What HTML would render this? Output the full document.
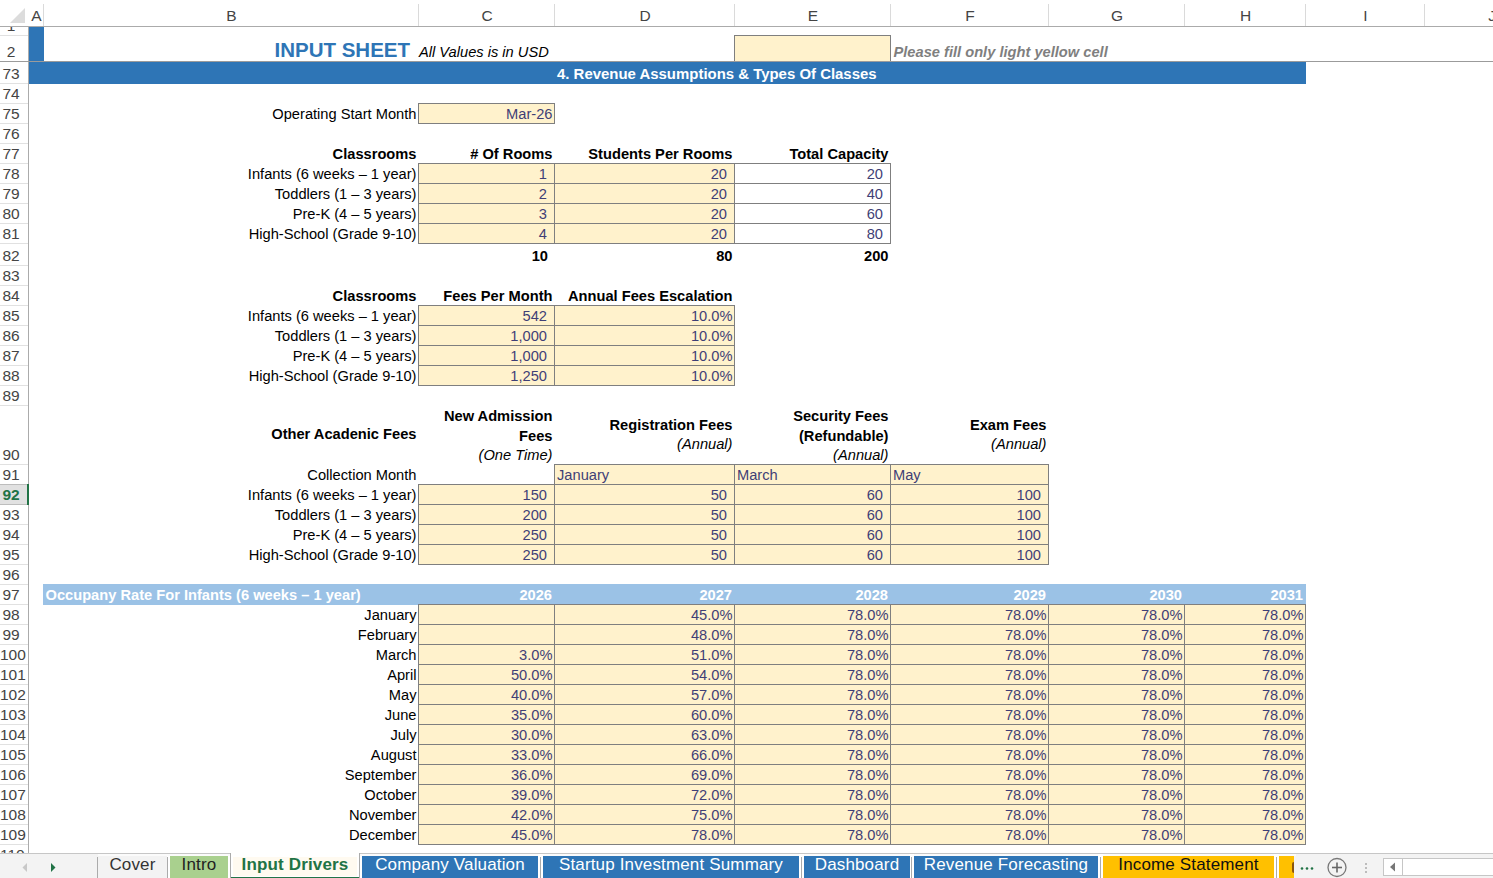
<!DOCTYPE html>
<html><head><meta charset="utf-8"><title>Input Drivers</title>
<style>
html,body{margin:0;padding:0;}
body{width:1493px;height:878px;overflow:hidden;position:relative;background:#fff;font-family:"Liberation Sans",sans-serif;}
body div{position:absolute;box-sizing:border-box;}
.t{white-space:nowrap;overflow:visible;}
.h{font-size:15.5px;color:#444444;white-space:nowrap;}
.tab{white-space:nowrap;overflow:hidden;}
b{font-weight:bold} i{font-style:italic}
</style></head><body>
<div style="left:29px;top:27px;width:15px;height:34px;background:#2E75B6"></div>
<div style="left:734px;top:35px;width:157px;height:27px;background:#FFF2CC"></div>
<div style="left:734px;top:35px;width:157px;height:1px;background:#7F7F7F"></div>
<div style="left:734px;top:61px;width:157px;height:1px;background:#7F7F7F"></div>
<div style="left:734px;top:35px;width:1px;height:27px;background:#7F7F7F"></div>
<div style="left:890px;top:35px;width:1px;height:27px;background:#7F7F7F"></div>
<div class="t" style="left:43px;top:38.22px;width:375px;height:24px;line-height:24px;text-align:right;font-size:20.5px;color:#2E75B6;font-weight:bold;font-style:normal;padding-right:8px;">INPUT SHEET</div>
<div class="t" style="left:418px;top:40.15px;width:300px;height:24px;line-height:24px;text-align:left;font-size:14.67px;color:#000;font-weight:normal;font-style:italic;padding-left:1px;">All Values is in USD</div>
<div class="t" style="left:890px;top:40.15px;width:400px;height:24px;line-height:24px;text-align:left;font-size:14.67px;color:#7F7F7F;font-weight:bold;font-style:italic;padding-left:3.5px;">Please fill only light yellow cell</div>
<div style="left:29px;top:62px;width:1277px;height:22px;background:#2E75B6"></div>
<div class="t" style="left:557px;top:62.06px;width:443px;height:24px;line-height:24px;text-align:left;font-size:14.95px;color:#fff;font-weight:bold;font-style:normal;padding-left:0px;">4. Revenue Assumptions &amp; Types Of Classes</div>
<div class="t" style="left:43px;top:102.15px;width:375px;height:24px;line-height:24px;text-align:right;font-size:14.67px;color:#000;font-weight:normal;font-style:normal;padding-right:1.5px;">Operating Start Month</div>
<div style="left:418px;top:103px;width:137px;height:21px;background:#FFF2CC"></div>
<div style="left:418px;top:103px;width:137px;height:1px;background:#7F7F7F"></div>
<div style="left:418px;top:123px;width:137px;height:1px;background:#7F7F7F"></div>
<div style="left:418px;top:103px;width:1px;height:21px;background:#7F7F7F"></div>
<div style="left:554px;top:103px;width:1px;height:21px;background:#7F7F7F"></div>
<div class="t" style="left:418px;top:102.15px;width:136px;height:24px;line-height:24px;text-align:right;font-size:14.67px;color:#3F3F76;font-weight:normal;font-style:normal;padding-right:1.5px;">Mar-26</div>
<div class="t" style="left:43px;top:142.15px;width:375px;height:24px;line-height:24px;text-align:right;font-size:14.67px;color:#000;font-weight:bold;font-style:normal;padding-right:1.5px;">Classrooms</div>
<div class="t" style="left:418px;top:142.15px;width:136px;height:24px;line-height:24px;text-align:right;font-size:14.67px;color:#000;font-weight:bold;font-style:normal;padding-right:1.5px;"># Of Rooms</div>
<div class="t" style="left:554px;top:142.15px;width:180px;height:24px;line-height:24px;text-align:right;font-size:14.67px;color:#000;font-weight:bold;font-style:normal;padding-right:1.5px;">Students Per Rooms</div>
<div class="t" style="left:734px;top:142.15px;width:156px;height:24px;line-height:24px;text-align:right;font-size:14.67px;color:#000;font-weight:bold;font-style:normal;padding-right:1.5px;">Total Capacity</div>
<div style="left:418px;top:163px;width:317px;height:81px;background:#FFF2CC"></div>
<div style="left:418px;top:163px;width:317px;height:1px;background:#7F7F7F"></div>
<div style="left:418px;top:183px;width:317px;height:1px;background:#7F7F7F"></div>
<div style="left:418px;top:203px;width:317px;height:1px;background:#7F7F7F"></div>
<div style="left:418px;top:223px;width:317px;height:1px;background:#7F7F7F"></div>
<div style="left:418px;top:243px;width:317px;height:1px;background:#7F7F7F"></div>
<div style="left:418px;top:163px;width:1px;height:81px;background:#7F7F7F"></div>
<div style="left:554px;top:163px;width:1px;height:81px;background:#7F7F7F"></div>
<div style="left:734px;top:163px;width:1px;height:81px;background:#7F7F7F"></div>
<div style="left:734px;top:163px;width:157px;height:1px;background:#7F7F7F"></div>
<div style="left:734px;top:183px;width:157px;height:1px;background:#7F7F7F"></div>
<div style="left:734px;top:203px;width:157px;height:1px;background:#7F7F7F"></div>
<div style="left:734px;top:223px;width:157px;height:1px;background:#7F7F7F"></div>
<div style="left:734px;top:243px;width:157px;height:1px;background:#7F7F7F"></div>
<div style="left:734px;top:163px;width:1px;height:81px;background:#7F7F7F"></div>
<div style="left:890px;top:163px;width:1px;height:81px;background:#7F7F7F"></div>
<div class="t" style="left:43px;top:162.15px;width:375px;height:24px;line-height:24px;text-align:right;font-size:14.67px;color:#000;font-weight:normal;font-style:normal;padding-right:1.5px;">Infants (6 weeks &ndash; 1 year)</div>
<div class="t" style="left:418px;top:162.15px;width:136px;height:24px;line-height:24px;text-align:right;font-size:14.67px;color:#3F3F76;font-weight:normal;font-style:normal;padding-right:7px;">1</div>
<div class="t" style="left:554px;top:162.15px;width:180px;height:24px;line-height:24px;text-align:right;font-size:14.67px;color:#3F3F76;font-weight:normal;font-style:normal;padding-right:7px;">20</div>
<div class="t" style="left:734px;top:162.15px;width:156px;height:24px;line-height:24px;text-align:right;font-size:14.67px;color:#3F3F76;font-weight:normal;font-style:normal;padding-right:7px;">20</div>
<div class="t" style="left:43px;top:182.15px;width:375px;height:24px;line-height:24px;text-align:right;font-size:14.67px;color:#000;font-weight:normal;font-style:normal;padding-right:1.5px;">Toddlers (1 &ndash; 3 years)</div>
<div class="t" style="left:418px;top:182.15px;width:136px;height:24px;line-height:24px;text-align:right;font-size:14.67px;color:#3F3F76;font-weight:normal;font-style:normal;padding-right:7px;">2</div>
<div class="t" style="left:554px;top:182.15px;width:180px;height:24px;line-height:24px;text-align:right;font-size:14.67px;color:#3F3F76;font-weight:normal;font-style:normal;padding-right:7px;">20</div>
<div class="t" style="left:734px;top:182.15px;width:156px;height:24px;line-height:24px;text-align:right;font-size:14.67px;color:#3F3F76;font-weight:normal;font-style:normal;padding-right:7px;">40</div>
<div class="t" style="left:43px;top:202.15px;width:375px;height:24px;line-height:24px;text-align:right;font-size:14.67px;color:#000;font-weight:normal;font-style:normal;padding-right:1.5px;">Pre-K (4 &ndash; 5 years)</div>
<div class="t" style="left:418px;top:202.15px;width:136px;height:24px;line-height:24px;text-align:right;font-size:14.67px;color:#3F3F76;font-weight:normal;font-style:normal;padding-right:7px;">3</div>
<div class="t" style="left:554px;top:202.15px;width:180px;height:24px;line-height:24px;text-align:right;font-size:14.67px;color:#3F3F76;font-weight:normal;font-style:normal;padding-right:7px;">20</div>
<div class="t" style="left:734px;top:202.15px;width:156px;height:24px;line-height:24px;text-align:right;font-size:14.67px;color:#3F3F76;font-weight:normal;font-style:normal;padding-right:7px;">60</div>
<div class="t" style="left:43px;top:222.15px;width:375px;height:24px;line-height:24px;text-align:right;font-size:14.67px;color:#000;font-weight:normal;font-style:normal;padding-right:1.5px;">High-School (Grade 9-10)</div>
<div class="t" style="left:418px;top:222.15px;width:136px;height:24px;line-height:24px;text-align:right;font-size:14.67px;color:#3F3F76;font-weight:normal;font-style:normal;padding-right:7px;">4</div>
<div class="t" style="left:554px;top:222.15px;width:180px;height:24px;line-height:24px;text-align:right;font-size:14.67px;color:#3F3F76;font-weight:normal;font-style:normal;padding-right:7px;">20</div>
<div class="t" style="left:734px;top:222.15px;width:156px;height:24px;line-height:24px;text-align:right;font-size:14.67px;color:#3F3F76;font-weight:normal;font-style:normal;padding-right:7px;">80</div>
<div class="t" style="left:418px;top:244.15px;width:136px;height:24px;line-height:24px;text-align:right;font-size:14.67px;color:#000;font-weight:bold;font-style:normal;padding-right:6px;">10</div>
<div class="t" style="left:554px;top:244.15px;width:180px;height:24px;line-height:24px;text-align:right;font-size:14.67px;color:#000;font-weight:bold;font-style:normal;padding-right:1.5px;">80</div>
<div class="t" style="left:734px;top:244.15px;width:156px;height:24px;line-height:24px;text-align:right;font-size:14.67px;color:#000;font-weight:bold;font-style:normal;padding-right:1.5px;">200</div>
<div class="t" style="left:43px;top:284.15px;width:375px;height:24px;line-height:24px;text-align:right;font-size:14.67px;color:#000;font-weight:bold;font-style:normal;padding-right:1.5px;">Classrooms</div>
<div class="t" style="left:418px;top:284.15px;width:136px;height:24px;line-height:24px;text-align:right;font-size:14.67px;color:#000;font-weight:bold;font-style:normal;padding-right:1.5px;">Fees Per Month</div>
<div class="t" style="left:554px;top:284.15px;width:180px;height:24px;line-height:24px;text-align:right;font-size:14.67px;color:#000;font-weight:bold;font-style:normal;padding-right:1.5px;">Annual Fees Escalation</div>
<div style="left:418px;top:305px;width:317px;height:81px;background:#FFF2CC"></div>
<div style="left:418px;top:305px;width:317px;height:1px;background:#7F7F7F"></div>
<div style="left:418px;top:325px;width:317px;height:1px;background:#7F7F7F"></div>
<div style="left:418px;top:345px;width:317px;height:1px;background:#7F7F7F"></div>
<div style="left:418px;top:365px;width:317px;height:1px;background:#7F7F7F"></div>
<div style="left:418px;top:385px;width:317px;height:1px;background:#7F7F7F"></div>
<div style="left:418px;top:305px;width:1px;height:81px;background:#7F7F7F"></div>
<div style="left:554px;top:305px;width:1px;height:81px;background:#7F7F7F"></div>
<div style="left:734px;top:305px;width:1px;height:81px;background:#7F7F7F"></div>
<div class="t" style="left:43px;top:304.15px;width:375px;height:24px;line-height:24px;text-align:right;font-size:14.67px;color:#000;font-weight:normal;font-style:normal;padding-right:1.5px;">Infants (6 weeks &ndash; 1 year)</div>
<div class="t" style="left:418px;top:304.15px;width:136px;height:24px;line-height:24px;text-align:right;font-size:14.67px;color:#3F3F76;font-weight:normal;font-style:normal;padding-right:7px;">542</div>
<div class="t" style="left:554px;top:304.15px;width:180px;height:24px;line-height:24px;text-align:right;font-size:14.67px;color:#3F3F76;font-weight:normal;font-style:normal;padding-right:1.5px;">10.0%</div>
<div class="t" style="left:43px;top:324.15px;width:375px;height:24px;line-height:24px;text-align:right;font-size:14.67px;color:#000;font-weight:normal;font-style:normal;padding-right:1.5px;">Toddlers (1 &ndash; 3 years)</div>
<div class="t" style="left:418px;top:324.15px;width:136px;height:24px;line-height:24px;text-align:right;font-size:14.67px;color:#3F3F76;font-weight:normal;font-style:normal;padding-right:7px;">1,000</div>
<div class="t" style="left:554px;top:324.15px;width:180px;height:24px;line-height:24px;text-align:right;font-size:14.67px;color:#3F3F76;font-weight:normal;font-style:normal;padding-right:1.5px;">10.0%</div>
<div class="t" style="left:43px;top:344.15px;width:375px;height:24px;line-height:24px;text-align:right;font-size:14.67px;color:#000;font-weight:normal;font-style:normal;padding-right:1.5px;">Pre-K (4 &ndash; 5 years)</div>
<div class="t" style="left:418px;top:344.15px;width:136px;height:24px;line-height:24px;text-align:right;font-size:14.67px;color:#3F3F76;font-weight:normal;font-style:normal;padding-right:7px;">1,000</div>
<div class="t" style="left:554px;top:344.15px;width:180px;height:24px;line-height:24px;text-align:right;font-size:14.67px;color:#3F3F76;font-weight:normal;font-style:normal;padding-right:1.5px;">10.0%</div>
<div class="t" style="left:43px;top:364.15px;width:375px;height:24px;line-height:24px;text-align:right;font-size:14.67px;color:#000;font-weight:normal;font-style:normal;padding-right:1.5px;">High-School (Grade 9-10)</div>
<div class="t" style="left:418px;top:364.15px;width:136px;height:24px;line-height:24px;text-align:right;font-size:14.67px;color:#3F3F76;font-weight:normal;font-style:normal;padding-right:7px;">1,250</div>
<div class="t" style="left:554px;top:364.15px;width:180px;height:24px;line-height:24px;text-align:right;font-size:14.67px;color:#3F3F76;font-weight:normal;font-style:normal;padding-right:1.5px;">10.0%</div>
<div class="t" style="left:43px;top:406px;width:375px;height:58px;display:flex;flex-direction:column;justify-content:center;text-align:right;font-size:14.67px;line-height:19.5px;padding-right:1.5px"><span style="display:block"><b>Other Acadenic Fees</b></span></div>
<div class="t" style="left:418px;top:407.3px;width:136px;height:58.0px;display:flex;flex-direction:column;justify-content:center;text-align:right;font-size:14.67px;line-height:19.5px;padding-right:1.5px"><span style="display:block"><b>New Admission</b></span><span style="display:block"><b>Fees</b></span><span style="display:block"><i>(One Time)</i></span></div>
<div class="t" style="left:554px;top:406px;width:180px;height:58px;display:flex;flex-direction:column;justify-content:center;text-align:right;font-size:14.67px;line-height:19.5px;padding-right:1.5px"><span style="display:block"><b>Registration Fees</b></span><span style="display:block"><i>(Annual)</i></span></div>
<div class="t" style="left:734px;top:407.3px;width:156px;height:58.0px;display:flex;flex-direction:column;justify-content:center;text-align:right;font-size:14.67px;line-height:19.5px;padding-right:1.5px"><span style="display:block"><b>Security Fees</b></span><span style="display:block"><b>(Refundable)</b></span><span style="display:block"><i>(Annual)</i></span></div>
<div class="t" style="left:890px;top:406px;width:158px;height:58px;display:flex;flex-direction:column;justify-content:center;text-align:right;font-size:14.67px;line-height:19.5px;padding-right:1.5px"><span style="display:block"><b>Exam Fees</b></span><span style="display:block"><i>(Annual)</i></span></div>
<div class="t" style="left:43px;top:463.15px;width:375px;height:24px;line-height:24px;text-align:right;font-size:14.67px;color:#000;font-weight:normal;font-style:normal;padding-right:1.5px;">Collection Month</div>
<div style="left:554px;top:464px;width:495px;height:21px;background:#FFF2CC"></div>
<div style="left:554px;top:464px;width:495px;height:1px;background:#7F7F7F"></div>
<div style="left:554px;top:484px;width:495px;height:1px;background:#7F7F7F"></div>
<div style="left:554px;top:464px;width:1px;height:21px;background:#7F7F7F"></div>
<div style="left:734px;top:464px;width:1px;height:21px;background:#7F7F7F"></div>
<div style="left:890px;top:464px;width:1px;height:21px;background:#7F7F7F"></div>
<div style="left:1048px;top:464px;width:1px;height:21px;background:#7F7F7F"></div>
<div class="t" style="left:554px;top:463.15px;width:180px;height:24px;line-height:24px;text-align:left;font-size:14.67px;color:#3F3F76;font-weight:normal;font-style:normal;padding-left:3px;">January</div>
<div class="t" style="left:734px;top:463.15px;width:156px;height:24px;line-height:24px;text-align:left;font-size:14.67px;color:#3F3F76;font-weight:normal;font-style:normal;padding-left:3px;">March</div>
<div class="t" style="left:890px;top:463.15px;width:158px;height:24px;line-height:24px;text-align:left;font-size:14.67px;color:#3F3F76;font-weight:normal;font-style:normal;padding-left:3px;">May</div>
<div style="left:418px;top:484px;width:631px;height:81px;background:#FFF2CC"></div>
<div style="left:418px;top:484px;width:631px;height:1px;background:#7F7F7F"></div>
<div style="left:418px;top:504px;width:631px;height:1px;background:#7F7F7F"></div>
<div style="left:418px;top:524px;width:631px;height:1px;background:#7F7F7F"></div>
<div style="left:418px;top:544px;width:631px;height:1px;background:#7F7F7F"></div>
<div style="left:418px;top:564px;width:631px;height:1px;background:#7F7F7F"></div>
<div style="left:418px;top:484px;width:1px;height:81px;background:#7F7F7F"></div>
<div style="left:554px;top:484px;width:1px;height:81px;background:#7F7F7F"></div>
<div style="left:734px;top:484px;width:1px;height:81px;background:#7F7F7F"></div>
<div style="left:890px;top:484px;width:1px;height:81px;background:#7F7F7F"></div>
<div style="left:1048px;top:484px;width:1px;height:81px;background:#7F7F7F"></div>
<div class="t" style="left:43px;top:483.15px;width:375px;height:24px;line-height:24px;text-align:right;font-size:14.67px;color:#000;font-weight:normal;font-style:normal;padding-right:1.5px;">Infants (6 weeks &ndash; 1 year)</div>
<div class="t" style="left:418px;top:483.15px;width:136px;height:24px;line-height:24px;text-align:right;font-size:14.67px;color:#3F3F76;font-weight:normal;font-style:normal;padding-right:7px;">150</div>
<div class="t" style="left:554px;top:483.15px;width:180px;height:24px;line-height:24px;text-align:right;font-size:14.67px;color:#3F3F76;font-weight:normal;font-style:normal;padding-right:7px;">50</div>
<div class="t" style="left:734px;top:483.15px;width:156px;height:24px;line-height:24px;text-align:right;font-size:14.67px;color:#3F3F76;font-weight:normal;font-style:normal;padding-right:7px;">60</div>
<div class="t" style="left:890px;top:483.15px;width:158px;height:24px;line-height:24px;text-align:right;font-size:14.67px;color:#3F3F76;font-weight:normal;font-style:normal;padding-right:7px;">100</div>
<div class="t" style="left:43px;top:503.15px;width:375px;height:24px;line-height:24px;text-align:right;font-size:14.67px;color:#000;font-weight:normal;font-style:normal;padding-right:1.5px;">Toddlers (1 &ndash; 3 years)</div>
<div class="t" style="left:418px;top:503.15px;width:136px;height:24px;line-height:24px;text-align:right;font-size:14.67px;color:#3F3F76;font-weight:normal;font-style:normal;padding-right:7px;">200</div>
<div class="t" style="left:554px;top:503.15px;width:180px;height:24px;line-height:24px;text-align:right;font-size:14.67px;color:#3F3F76;font-weight:normal;font-style:normal;padding-right:7px;">50</div>
<div class="t" style="left:734px;top:503.15px;width:156px;height:24px;line-height:24px;text-align:right;font-size:14.67px;color:#3F3F76;font-weight:normal;font-style:normal;padding-right:7px;">60</div>
<div class="t" style="left:890px;top:503.15px;width:158px;height:24px;line-height:24px;text-align:right;font-size:14.67px;color:#3F3F76;font-weight:normal;font-style:normal;padding-right:7px;">100</div>
<div class="t" style="left:43px;top:523.15px;width:375px;height:24px;line-height:24px;text-align:right;font-size:14.67px;color:#000;font-weight:normal;font-style:normal;padding-right:1.5px;">Pre-K (4 &ndash; 5 years)</div>
<div class="t" style="left:418px;top:523.15px;width:136px;height:24px;line-height:24px;text-align:right;font-size:14.67px;color:#3F3F76;font-weight:normal;font-style:normal;padding-right:7px;">250</div>
<div class="t" style="left:554px;top:523.15px;width:180px;height:24px;line-height:24px;text-align:right;font-size:14.67px;color:#3F3F76;font-weight:normal;font-style:normal;padding-right:7px;">50</div>
<div class="t" style="left:734px;top:523.15px;width:156px;height:24px;line-height:24px;text-align:right;font-size:14.67px;color:#3F3F76;font-weight:normal;font-style:normal;padding-right:7px;">60</div>
<div class="t" style="left:890px;top:523.15px;width:158px;height:24px;line-height:24px;text-align:right;font-size:14.67px;color:#3F3F76;font-weight:normal;font-style:normal;padding-right:7px;">100</div>
<div class="t" style="left:43px;top:543.15px;width:375px;height:24px;line-height:24px;text-align:right;font-size:14.67px;color:#000;font-weight:normal;font-style:normal;padding-right:1.5px;">High-School (Grade 9-10)</div>
<div class="t" style="left:418px;top:543.15px;width:136px;height:24px;line-height:24px;text-align:right;font-size:14.67px;color:#3F3F76;font-weight:normal;font-style:normal;padding-right:7px;">250</div>
<div class="t" style="left:554px;top:543.15px;width:180px;height:24px;line-height:24px;text-align:right;font-size:14.67px;color:#3F3F76;font-weight:normal;font-style:normal;padding-right:7px;">50</div>
<div class="t" style="left:734px;top:543.15px;width:156px;height:24px;line-height:24px;text-align:right;font-size:14.67px;color:#3F3F76;font-weight:normal;font-style:normal;padding-right:7px;">60</div>
<div class="t" style="left:890px;top:543.15px;width:158px;height:24px;line-height:24px;text-align:right;font-size:14.67px;color:#3F3F76;font-weight:normal;font-style:normal;padding-right:7px;">100</div>
<div style="left:43px;top:584px;width:1263px;height:21px;background:#9BC2E6"></div>
<div class="t" style="left:43px;top:583.15px;width:675px;height:24px;line-height:24px;text-align:left;font-size:14.67px;color:#fff;font-weight:bold;font-style:normal;padding-left:2.5px;">Occupany Rate For Infants (6 weeks &ndash; 1 year)</div>
<div class="t" style="left:418px;top:583.15px;width:136px;height:24px;line-height:24px;text-align:right;font-size:14.67px;color:#fff;font-weight:bold;font-style:normal;padding-right:2px;">2026</div>
<div class="t" style="left:554px;top:583.15px;width:180px;height:24px;line-height:24px;text-align:right;font-size:14.67px;color:#fff;font-weight:bold;font-style:normal;padding-right:2px;">2027</div>
<div class="t" style="left:734px;top:583.15px;width:156px;height:24px;line-height:24px;text-align:right;font-size:14.67px;color:#fff;font-weight:bold;font-style:normal;padding-right:2px;">2028</div>
<div class="t" style="left:890px;top:583.15px;width:158px;height:24px;line-height:24px;text-align:right;font-size:14.67px;color:#fff;font-weight:bold;font-style:normal;padding-right:2px;">2029</div>
<div class="t" style="left:1048px;top:583.15px;width:136px;height:24px;line-height:24px;text-align:right;font-size:14.67px;color:#fff;font-weight:bold;font-style:normal;padding-right:2px;">2030</div>
<div class="t" style="left:1184px;top:583.15px;width:121px;height:24px;line-height:24px;text-align:right;font-size:14.67px;color:#fff;font-weight:bold;font-style:normal;padding-right:2px;">2031</div>
<div style="left:418px;top:604px;width:888px;height:241px;background:#FFF2CC"></div>
<div style="left:418px;top:604px;width:888px;height:1px;background:#7F7F7F"></div>
<div style="left:418px;top:624px;width:888px;height:1px;background:#7F7F7F"></div>
<div style="left:418px;top:644px;width:888px;height:1px;background:#7F7F7F"></div>
<div style="left:418px;top:664px;width:888px;height:1px;background:#7F7F7F"></div>
<div style="left:418px;top:684px;width:888px;height:1px;background:#7F7F7F"></div>
<div style="left:418px;top:704px;width:888px;height:1px;background:#7F7F7F"></div>
<div style="left:418px;top:724px;width:888px;height:1px;background:#7F7F7F"></div>
<div style="left:418px;top:744px;width:888px;height:1px;background:#7F7F7F"></div>
<div style="left:418px;top:764px;width:888px;height:1px;background:#7F7F7F"></div>
<div style="left:418px;top:784px;width:888px;height:1px;background:#7F7F7F"></div>
<div style="left:418px;top:804px;width:888px;height:1px;background:#7F7F7F"></div>
<div style="left:418px;top:824px;width:888px;height:1px;background:#7F7F7F"></div>
<div style="left:418px;top:844px;width:888px;height:1px;background:#7F7F7F"></div>
<div style="left:418px;top:604px;width:1px;height:241px;background:#7F7F7F"></div>
<div style="left:554px;top:604px;width:1px;height:241px;background:#7F7F7F"></div>
<div style="left:734px;top:604px;width:1px;height:241px;background:#7F7F7F"></div>
<div style="left:890px;top:604px;width:1px;height:241px;background:#7F7F7F"></div>
<div style="left:1048px;top:604px;width:1px;height:241px;background:#7F7F7F"></div>
<div style="left:1184px;top:604px;width:1px;height:241px;background:#7F7F7F"></div>
<div style="left:1305px;top:604px;width:1px;height:241px;background:#7F7F7F"></div>
<div class="t" style="left:43px;top:603.15px;width:375px;height:24px;line-height:24px;text-align:right;font-size:14.67px;color:#000;font-weight:normal;font-style:normal;padding-right:1.5px;">January</div>
<div class="t" style="left:554px;top:603.15px;width:180px;height:24px;line-height:24px;text-align:right;font-size:14.67px;color:#3F3F76;font-weight:normal;font-style:normal;padding-right:1.5px;">45.0%</div>
<div class="t" style="left:734px;top:603.15px;width:156px;height:24px;line-height:24px;text-align:right;font-size:14.67px;color:#3F3F76;font-weight:normal;font-style:normal;padding-right:1.5px;">78.0%</div>
<div class="t" style="left:890px;top:603.15px;width:158px;height:24px;line-height:24px;text-align:right;font-size:14.67px;color:#3F3F76;font-weight:normal;font-style:normal;padding-right:1.5px;">78.0%</div>
<div class="t" style="left:1048px;top:603.15px;width:136px;height:24px;line-height:24px;text-align:right;font-size:14.67px;color:#3F3F76;font-weight:normal;font-style:normal;padding-right:1.5px;">78.0%</div>
<div class="t" style="left:1184px;top:603.15px;width:121px;height:24px;line-height:24px;text-align:right;font-size:14.67px;color:#3F3F76;font-weight:normal;font-style:normal;padding-right:1.5px;">78.0%</div>
<div class="t" style="left:43px;top:623.15px;width:375px;height:24px;line-height:24px;text-align:right;font-size:14.67px;color:#000;font-weight:normal;font-style:normal;padding-right:1.5px;">February</div>
<div class="t" style="left:554px;top:623.15px;width:180px;height:24px;line-height:24px;text-align:right;font-size:14.67px;color:#3F3F76;font-weight:normal;font-style:normal;padding-right:1.5px;">48.0%</div>
<div class="t" style="left:734px;top:623.15px;width:156px;height:24px;line-height:24px;text-align:right;font-size:14.67px;color:#3F3F76;font-weight:normal;font-style:normal;padding-right:1.5px;">78.0%</div>
<div class="t" style="left:890px;top:623.15px;width:158px;height:24px;line-height:24px;text-align:right;font-size:14.67px;color:#3F3F76;font-weight:normal;font-style:normal;padding-right:1.5px;">78.0%</div>
<div class="t" style="left:1048px;top:623.15px;width:136px;height:24px;line-height:24px;text-align:right;font-size:14.67px;color:#3F3F76;font-weight:normal;font-style:normal;padding-right:1.5px;">78.0%</div>
<div class="t" style="left:1184px;top:623.15px;width:121px;height:24px;line-height:24px;text-align:right;font-size:14.67px;color:#3F3F76;font-weight:normal;font-style:normal;padding-right:1.5px;">78.0%</div>
<div class="t" style="left:43px;top:643.15px;width:375px;height:24px;line-height:24px;text-align:right;font-size:14.67px;color:#000;font-weight:normal;font-style:normal;padding-right:1.5px;">March</div>
<div class="t" style="left:418px;top:643.15px;width:136px;height:24px;line-height:24px;text-align:right;font-size:14.67px;color:#3F3F76;font-weight:normal;font-style:normal;padding-right:1.5px;">3.0%</div>
<div class="t" style="left:554px;top:643.15px;width:180px;height:24px;line-height:24px;text-align:right;font-size:14.67px;color:#3F3F76;font-weight:normal;font-style:normal;padding-right:1.5px;">51.0%</div>
<div class="t" style="left:734px;top:643.15px;width:156px;height:24px;line-height:24px;text-align:right;font-size:14.67px;color:#3F3F76;font-weight:normal;font-style:normal;padding-right:1.5px;">78.0%</div>
<div class="t" style="left:890px;top:643.15px;width:158px;height:24px;line-height:24px;text-align:right;font-size:14.67px;color:#3F3F76;font-weight:normal;font-style:normal;padding-right:1.5px;">78.0%</div>
<div class="t" style="left:1048px;top:643.15px;width:136px;height:24px;line-height:24px;text-align:right;font-size:14.67px;color:#3F3F76;font-weight:normal;font-style:normal;padding-right:1.5px;">78.0%</div>
<div class="t" style="left:1184px;top:643.15px;width:121px;height:24px;line-height:24px;text-align:right;font-size:14.67px;color:#3F3F76;font-weight:normal;font-style:normal;padding-right:1.5px;">78.0%</div>
<div class="t" style="left:43px;top:663.15px;width:375px;height:24px;line-height:24px;text-align:right;font-size:14.67px;color:#000;font-weight:normal;font-style:normal;padding-right:1.5px;">April</div>
<div class="t" style="left:418px;top:663.15px;width:136px;height:24px;line-height:24px;text-align:right;font-size:14.67px;color:#3F3F76;font-weight:normal;font-style:normal;padding-right:1.5px;">50.0%</div>
<div class="t" style="left:554px;top:663.15px;width:180px;height:24px;line-height:24px;text-align:right;font-size:14.67px;color:#3F3F76;font-weight:normal;font-style:normal;padding-right:1.5px;">54.0%</div>
<div class="t" style="left:734px;top:663.15px;width:156px;height:24px;line-height:24px;text-align:right;font-size:14.67px;color:#3F3F76;font-weight:normal;font-style:normal;padding-right:1.5px;">78.0%</div>
<div class="t" style="left:890px;top:663.15px;width:158px;height:24px;line-height:24px;text-align:right;font-size:14.67px;color:#3F3F76;font-weight:normal;font-style:normal;padding-right:1.5px;">78.0%</div>
<div class="t" style="left:1048px;top:663.15px;width:136px;height:24px;line-height:24px;text-align:right;font-size:14.67px;color:#3F3F76;font-weight:normal;font-style:normal;padding-right:1.5px;">78.0%</div>
<div class="t" style="left:1184px;top:663.15px;width:121px;height:24px;line-height:24px;text-align:right;font-size:14.67px;color:#3F3F76;font-weight:normal;font-style:normal;padding-right:1.5px;">78.0%</div>
<div class="t" style="left:43px;top:683.15px;width:375px;height:24px;line-height:24px;text-align:right;font-size:14.67px;color:#000;font-weight:normal;font-style:normal;padding-right:1.5px;">May</div>
<div class="t" style="left:418px;top:683.15px;width:136px;height:24px;line-height:24px;text-align:right;font-size:14.67px;color:#3F3F76;font-weight:normal;font-style:normal;padding-right:1.5px;">40.0%</div>
<div class="t" style="left:554px;top:683.15px;width:180px;height:24px;line-height:24px;text-align:right;font-size:14.67px;color:#3F3F76;font-weight:normal;font-style:normal;padding-right:1.5px;">57.0%</div>
<div class="t" style="left:734px;top:683.15px;width:156px;height:24px;line-height:24px;text-align:right;font-size:14.67px;color:#3F3F76;font-weight:normal;font-style:normal;padding-right:1.5px;">78.0%</div>
<div class="t" style="left:890px;top:683.15px;width:158px;height:24px;line-height:24px;text-align:right;font-size:14.67px;color:#3F3F76;font-weight:normal;font-style:normal;padding-right:1.5px;">78.0%</div>
<div class="t" style="left:1048px;top:683.15px;width:136px;height:24px;line-height:24px;text-align:right;font-size:14.67px;color:#3F3F76;font-weight:normal;font-style:normal;padding-right:1.5px;">78.0%</div>
<div class="t" style="left:1184px;top:683.15px;width:121px;height:24px;line-height:24px;text-align:right;font-size:14.67px;color:#3F3F76;font-weight:normal;font-style:normal;padding-right:1.5px;">78.0%</div>
<div class="t" style="left:43px;top:703.15px;width:375px;height:24px;line-height:24px;text-align:right;font-size:14.67px;color:#000;font-weight:normal;font-style:normal;padding-right:1.5px;">June</div>
<div class="t" style="left:418px;top:703.15px;width:136px;height:24px;line-height:24px;text-align:right;font-size:14.67px;color:#3F3F76;font-weight:normal;font-style:normal;padding-right:1.5px;">35.0%</div>
<div class="t" style="left:554px;top:703.15px;width:180px;height:24px;line-height:24px;text-align:right;font-size:14.67px;color:#3F3F76;font-weight:normal;font-style:normal;padding-right:1.5px;">60.0%</div>
<div class="t" style="left:734px;top:703.15px;width:156px;height:24px;line-height:24px;text-align:right;font-size:14.67px;color:#3F3F76;font-weight:normal;font-style:normal;padding-right:1.5px;">78.0%</div>
<div class="t" style="left:890px;top:703.15px;width:158px;height:24px;line-height:24px;text-align:right;font-size:14.67px;color:#3F3F76;font-weight:normal;font-style:normal;padding-right:1.5px;">78.0%</div>
<div class="t" style="left:1048px;top:703.15px;width:136px;height:24px;line-height:24px;text-align:right;font-size:14.67px;color:#3F3F76;font-weight:normal;font-style:normal;padding-right:1.5px;">78.0%</div>
<div class="t" style="left:1184px;top:703.15px;width:121px;height:24px;line-height:24px;text-align:right;font-size:14.67px;color:#3F3F76;font-weight:normal;font-style:normal;padding-right:1.5px;">78.0%</div>
<div class="t" style="left:43px;top:723.15px;width:375px;height:24px;line-height:24px;text-align:right;font-size:14.67px;color:#000;font-weight:normal;font-style:normal;padding-right:1.5px;">July</div>
<div class="t" style="left:418px;top:723.15px;width:136px;height:24px;line-height:24px;text-align:right;font-size:14.67px;color:#3F3F76;font-weight:normal;font-style:normal;padding-right:1.5px;">30.0%</div>
<div class="t" style="left:554px;top:723.15px;width:180px;height:24px;line-height:24px;text-align:right;font-size:14.67px;color:#3F3F76;font-weight:normal;font-style:normal;padding-right:1.5px;">63.0%</div>
<div class="t" style="left:734px;top:723.15px;width:156px;height:24px;line-height:24px;text-align:right;font-size:14.67px;color:#3F3F76;font-weight:normal;font-style:normal;padding-right:1.5px;">78.0%</div>
<div class="t" style="left:890px;top:723.15px;width:158px;height:24px;line-height:24px;text-align:right;font-size:14.67px;color:#3F3F76;font-weight:normal;font-style:normal;padding-right:1.5px;">78.0%</div>
<div class="t" style="left:1048px;top:723.15px;width:136px;height:24px;line-height:24px;text-align:right;font-size:14.67px;color:#3F3F76;font-weight:normal;font-style:normal;padding-right:1.5px;">78.0%</div>
<div class="t" style="left:1184px;top:723.15px;width:121px;height:24px;line-height:24px;text-align:right;font-size:14.67px;color:#3F3F76;font-weight:normal;font-style:normal;padding-right:1.5px;">78.0%</div>
<div class="t" style="left:43px;top:743.15px;width:375px;height:24px;line-height:24px;text-align:right;font-size:14.67px;color:#000;font-weight:normal;font-style:normal;padding-right:1.5px;">August</div>
<div class="t" style="left:418px;top:743.15px;width:136px;height:24px;line-height:24px;text-align:right;font-size:14.67px;color:#3F3F76;font-weight:normal;font-style:normal;padding-right:1.5px;">33.0%</div>
<div class="t" style="left:554px;top:743.15px;width:180px;height:24px;line-height:24px;text-align:right;font-size:14.67px;color:#3F3F76;font-weight:normal;font-style:normal;padding-right:1.5px;">66.0%</div>
<div class="t" style="left:734px;top:743.15px;width:156px;height:24px;line-height:24px;text-align:right;font-size:14.67px;color:#3F3F76;font-weight:normal;font-style:normal;padding-right:1.5px;">78.0%</div>
<div class="t" style="left:890px;top:743.15px;width:158px;height:24px;line-height:24px;text-align:right;font-size:14.67px;color:#3F3F76;font-weight:normal;font-style:normal;padding-right:1.5px;">78.0%</div>
<div class="t" style="left:1048px;top:743.15px;width:136px;height:24px;line-height:24px;text-align:right;font-size:14.67px;color:#3F3F76;font-weight:normal;font-style:normal;padding-right:1.5px;">78.0%</div>
<div class="t" style="left:1184px;top:743.15px;width:121px;height:24px;line-height:24px;text-align:right;font-size:14.67px;color:#3F3F76;font-weight:normal;font-style:normal;padding-right:1.5px;">78.0%</div>
<div class="t" style="left:43px;top:763.15px;width:375px;height:24px;line-height:24px;text-align:right;font-size:14.67px;color:#000;font-weight:normal;font-style:normal;padding-right:1.5px;">September</div>
<div class="t" style="left:418px;top:763.15px;width:136px;height:24px;line-height:24px;text-align:right;font-size:14.67px;color:#3F3F76;font-weight:normal;font-style:normal;padding-right:1.5px;">36.0%</div>
<div class="t" style="left:554px;top:763.15px;width:180px;height:24px;line-height:24px;text-align:right;font-size:14.67px;color:#3F3F76;font-weight:normal;font-style:normal;padding-right:1.5px;">69.0%</div>
<div class="t" style="left:734px;top:763.15px;width:156px;height:24px;line-height:24px;text-align:right;font-size:14.67px;color:#3F3F76;font-weight:normal;font-style:normal;padding-right:1.5px;">78.0%</div>
<div class="t" style="left:890px;top:763.15px;width:158px;height:24px;line-height:24px;text-align:right;font-size:14.67px;color:#3F3F76;font-weight:normal;font-style:normal;padding-right:1.5px;">78.0%</div>
<div class="t" style="left:1048px;top:763.15px;width:136px;height:24px;line-height:24px;text-align:right;font-size:14.67px;color:#3F3F76;font-weight:normal;font-style:normal;padding-right:1.5px;">78.0%</div>
<div class="t" style="left:1184px;top:763.15px;width:121px;height:24px;line-height:24px;text-align:right;font-size:14.67px;color:#3F3F76;font-weight:normal;font-style:normal;padding-right:1.5px;">78.0%</div>
<div class="t" style="left:43px;top:783.15px;width:375px;height:24px;line-height:24px;text-align:right;font-size:14.67px;color:#000;font-weight:normal;font-style:normal;padding-right:1.5px;">October</div>
<div class="t" style="left:418px;top:783.15px;width:136px;height:24px;line-height:24px;text-align:right;font-size:14.67px;color:#3F3F76;font-weight:normal;font-style:normal;padding-right:1.5px;">39.0%</div>
<div class="t" style="left:554px;top:783.15px;width:180px;height:24px;line-height:24px;text-align:right;font-size:14.67px;color:#3F3F76;font-weight:normal;font-style:normal;padding-right:1.5px;">72.0%</div>
<div class="t" style="left:734px;top:783.15px;width:156px;height:24px;line-height:24px;text-align:right;font-size:14.67px;color:#3F3F76;font-weight:normal;font-style:normal;padding-right:1.5px;">78.0%</div>
<div class="t" style="left:890px;top:783.15px;width:158px;height:24px;line-height:24px;text-align:right;font-size:14.67px;color:#3F3F76;font-weight:normal;font-style:normal;padding-right:1.5px;">78.0%</div>
<div class="t" style="left:1048px;top:783.15px;width:136px;height:24px;line-height:24px;text-align:right;font-size:14.67px;color:#3F3F76;font-weight:normal;font-style:normal;padding-right:1.5px;">78.0%</div>
<div class="t" style="left:1184px;top:783.15px;width:121px;height:24px;line-height:24px;text-align:right;font-size:14.67px;color:#3F3F76;font-weight:normal;font-style:normal;padding-right:1.5px;">78.0%</div>
<div class="t" style="left:43px;top:803.15px;width:375px;height:24px;line-height:24px;text-align:right;font-size:14.67px;color:#000;font-weight:normal;font-style:normal;padding-right:1.5px;">November</div>
<div class="t" style="left:418px;top:803.15px;width:136px;height:24px;line-height:24px;text-align:right;font-size:14.67px;color:#3F3F76;font-weight:normal;font-style:normal;padding-right:1.5px;">42.0%</div>
<div class="t" style="left:554px;top:803.15px;width:180px;height:24px;line-height:24px;text-align:right;font-size:14.67px;color:#3F3F76;font-weight:normal;font-style:normal;padding-right:1.5px;">75.0%</div>
<div class="t" style="left:734px;top:803.15px;width:156px;height:24px;line-height:24px;text-align:right;font-size:14.67px;color:#3F3F76;font-weight:normal;font-style:normal;padding-right:1.5px;">78.0%</div>
<div class="t" style="left:890px;top:803.15px;width:158px;height:24px;line-height:24px;text-align:right;font-size:14.67px;color:#3F3F76;font-weight:normal;font-style:normal;padding-right:1.5px;">78.0%</div>
<div class="t" style="left:1048px;top:803.15px;width:136px;height:24px;line-height:24px;text-align:right;font-size:14.67px;color:#3F3F76;font-weight:normal;font-style:normal;padding-right:1.5px;">78.0%</div>
<div class="t" style="left:1184px;top:803.15px;width:121px;height:24px;line-height:24px;text-align:right;font-size:14.67px;color:#3F3F76;font-weight:normal;font-style:normal;padding-right:1.5px;">78.0%</div>
<div class="t" style="left:43px;top:823.15px;width:375px;height:24px;line-height:24px;text-align:right;font-size:14.67px;color:#000;font-weight:normal;font-style:normal;padding-right:1.5px;">December</div>
<div class="t" style="left:418px;top:823.15px;width:136px;height:24px;line-height:24px;text-align:right;font-size:14.67px;color:#3F3F76;font-weight:normal;font-style:normal;padding-right:1.5px;">45.0%</div>
<div class="t" style="left:554px;top:823.15px;width:180px;height:24px;line-height:24px;text-align:right;font-size:14.67px;color:#3F3F76;font-weight:normal;font-style:normal;padding-right:1.5px;">78.0%</div>
<div class="t" style="left:734px;top:823.15px;width:156px;height:24px;line-height:24px;text-align:right;font-size:14.67px;color:#3F3F76;font-weight:normal;font-style:normal;padding-right:1.5px;">78.0%</div>
<div class="t" style="left:890px;top:823.15px;width:158px;height:24px;line-height:24px;text-align:right;font-size:14.67px;color:#3F3F76;font-weight:normal;font-style:normal;padding-right:1.5px;">78.0%</div>
<div class="t" style="left:1048px;top:823.15px;width:136px;height:24px;line-height:24px;text-align:right;font-size:14.67px;color:#3F3F76;font-weight:normal;font-style:normal;padding-right:1.5px;">78.0%</div>
<div class="t" style="left:1184px;top:823.15px;width:121px;height:24px;line-height:24px;text-align:right;font-size:14.67px;color:#3F3F76;font-weight:normal;font-style:normal;padding-right:1.5px;">78.0%</div>
<div style="left:0px;top:0px;width:1493px;height:26px;background:#fff"></div>
<svg style="position:absolute;left:0;top:0" width="28" height="26"><polygon points="25,8 25,23 10,23" fill="#DCDCDC"/></svg>
<div style="left:43px;top:4px;width:1px;height:22px;background:#DADADA"></div>
<div class="h" style="left:29px;top:4.5px;width:15px;height:22px;line-height:22px;text-align:center">A</div>
<div style="left:418px;top:4px;width:1px;height:22px;background:#DADADA"></div>
<div class="h" style="left:44px;top:4.5px;width:375px;height:22px;line-height:22px;text-align:center">B</div>
<div style="left:554px;top:4px;width:1px;height:22px;background:#DADADA"></div>
<div class="h" style="left:419px;top:4.5px;width:136px;height:22px;line-height:22px;text-align:center">C</div>
<div style="left:734px;top:4px;width:1px;height:22px;background:#DADADA"></div>
<div class="h" style="left:555px;top:4.5px;width:180px;height:22px;line-height:22px;text-align:center">D</div>
<div style="left:890px;top:4px;width:1px;height:22px;background:#DADADA"></div>
<div class="h" style="left:735px;top:4.5px;width:156px;height:22px;line-height:22px;text-align:center">E</div>
<div style="left:1048px;top:4px;width:1px;height:22px;background:#DADADA"></div>
<div class="h" style="left:891px;top:4.5px;width:158px;height:22px;line-height:22px;text-align:center">F</div>
<div style="left:1184px;top:4px;width:1px;height:22px;background:#DADADA"></div>
<div class="h" style="left:1049px;top:4.5px;width:136px;height:22px;line-height:22px;text-align:center">G</div>
<div style="left:1305px;top:4px;width:1px;height:22px;background:#DADADA"></div>
<div class="h" style="left:1185px;top:4.5px;width:121px;height:22px;line-height:22px;text-align:center">H</div>
<div style="left:1424px;top:4px;width:1px;height:22px;background:#DADADA"></div>
<div class="h" style="left:1306px;top:4.5px;width:119px;height:22px;line-height:22px;text-align:center">I</div>
<div style="left:1558px;top:4px;width:1px;height:22px;background:#DADADA"></div>
<div class="h" style="left:1425px;top:4.5px;width:134px;height:22px;line-height:22px;text-align:center">J</div>
<div style="left:0px;top:26px;width:1493px;height:1px;background:#ABABAB"></div>
<div style="left:0px;top:27px;width:28px;height:826px;background:#fff"></div>
<div style="left:28px;top:27px;width:1px;height:826px;background:#ABABAB"></div>
<div style="left:0px;top:35px;width:28px;height:1px;background:#E1E1E1"></div>
<div style="left:0px;top:61px;width:28px;height:1px;background:#E1E1E1"></div>
<div style="left:0px;top:83px;width:28px;height:1px;background:#E1E1E1"></div>
<div style="left:0px;top:103px;width:28px;height:1px;background:#E1E1E1"></div>
<div style="left:0px;top:123px;width:28px;height:1px;background:#E1E1E1"></div>
<div style="left:0px;top:143px;width:28px;height:1px;background:#E1E1E1"></div>
<div style="left:0px;top:163px;width:28px;height:1px;background:#E1E1E1"></div>
<div style="left:0px;top:183px;width:28px;height:1px;background:#E1E1E1"></div>
<div style="left:0px;top:203px;width:28px;height:1px;background:#E1E1E1"></div>
<div style="left:0px;top:223px;width:28px;height:1px;background:#E1E1E1"></div>
<div style="left:0px;top:243px;width:28px;height:1px;background:#E1E1E1"></div>
<div style="left:0px;top:265px;width:28px;height:1px;background:#E1E1E1"></div>
<div style="left:0px;top:285px;width:28px;height:1px;background:#E1E1E1"></div>
<div style="left:0px;top:305px;width:28px;height:1px;background:#E1E1E1"></div>
<div style="left:0px;top:325px;width:28px;height:1px;background:#E1E1E1"></div>
<div style="left:0px;top:345px;width:28px;height:1px;background:#E1E1E1"></div>
<div style="left:0px;top:365px;width:28px;height:1px;background:#E1E1E1"></div>
<div style="left:0px;top:385px;width:28px;height:1px;background:#E1E1E1"></div>
<div style="left:0px;top:405px;width:28px;height:1px;background:#E1E1E1"></div>
<div style="left:0px;top:464px;width:28px;height:1px;background:#E1E1E1"></div>
<div style="left:0px;top:484px;width:28px;height:1px;background:#E1E1E1"></div>
<div style="left:0px;top:504px;width:28px;height:1px;background:#E1E1E1"></div>
<div style="left:0px;top:524px;width:28px;height:1px;background:#E1E1E1"></div>
<div style="left:0px;top:544px;width:28px;height:1px;background:#E1E1E1"></div>
<div style="left:0px;top:564px;width:28px;height:1px;background:#E1E1E1"></div>
<div style="left:0px;top:584px;width:28px;height:1px;background:#E1E1E1"></div>
<div style="left:0px;top:604px;width:28px;height:1px;background:#E1E1E1"></div>
<div style="left:0px;top:624px;width:28px;height:1px;background:#E1E1E1"></div>
<div style="left:0px;top:644px;width:28px;height:1px;background:#E1E1E1"></div>
<div style="left:0px;top:664px;width:28px;height:1px;background:#E1E1E1"></div>
<div style="left:0px;top:684px;width:28px;height:1px;background:#E1E1E1"></div>
<div style="left:0px;top:704px;width:28px;height:1px;background:#E1E1E1"></div>
<div style="left:0px;top:724px;width:28px;height:1px;background:#E1E1E1"></div>
<div style="left:0px;top:744px;width:28px;height:1px;background:#E1E1E1"></div>
<div style="left:0px;top:764px;width:28px;height:1px;background:#E1E1E1"></div>
<div style="left:0px;top:784px;width:28px;height:1px;background:#E1E1E1"></div>
<div style="left:0px;top:804px;width:28px;height:1px;background:#E1E1E1"></div>
<div style="left:0px;top:824px;width:28px;height:1px;background:#E1E1E1"></div>
<div style="left:0px;top:844px;width:28px;height:1px;background:#E1E1E1"></div>
<div style="left:0px;top:27px;width:27px;height:8px;overflow:hidden"><div class="h" style="left:0px;top:-11px;width:22px;height:20px;line-height:20px;text-align:center;">1</div></div>
<div style="left:0px;top:36px;width:27px;height:25px;overflow:hidden"><div class="h" style="left:0px;top:6px;width:22px;height:20px;line-height:20px;text-align:center;">2</div></div>
<div style="left:0px;top:62px;width:27px;height:21px;overflow:hidden"><div class="h" style="left:0px;top:2px;width:22px;height:20px;line-height:20px;text-align:center;">73</div></div>
<div style="left:0px;top:84px;width:27px;height:19px;overflow:hidden"><div class="h" style="left:0px;top:0px;width:22px;height:20px;line-height:20px;text-align:center;">74</div></div>
<div style="left:0px;top:104px;width:27px;height:19px;overflow:hidden"><div class="h" style="left:0px;top:0px;width:22px;height:20px;line-height:20px;text-align:center;">75</div></div>
<div style="left:0px;top:124px;width:27px;height:19px;overflow:hidden"><div class="h" style="left:0px;top:0px;width:22px;height:20px;line-height:20px;text-align:center;">76</div></div>
<div style="left:0px;top:144px;width:27px;height:19px;overflow:hidden"><div class="h" style="left:0px;top:0px;width:22px;height:20px;line-height:20px;text-align:center;">77</div></div>
<div style="left:0px;top:164px;width:27px;height:19px;overflow:hidden"><div class="h" style="left:0px;top:0px;width:22px;height:20px;line-height:20px;text-align:center;">78</div></div>
<div style="left:0px;top:184px;width:27px;height:19px;overflow:hidden"><div class="h" style="left:0px;top:0px;width:22px;height:20px;line-height:20px;text-align:center;">79</div></div>
<div style="left:0px;top:204px;width:27px;height:19px;overflow:hidden"><div class="h" style="left:0px;top:0px;width:22px;height:20px;line-height:20px;text-align:center;">80</div></div>
<div style="left:0px;top:224px;width:27px;height:19px;overflow:hidden"><div class="h" style="left:0px;top:0px;width:22px;height:20px;line-height:20px;text-align:center;">81</div></div>
<div style="left:0px;top:244px;width:27px;height:21px;overflow:hidden"><div class="h" style="left:0px;top:2px;width:22px;height:20px;line-height:20px;text-align:center;">82</div></div>
<div style="left:0px;top:266px;width:27px;height:19px;overflow:hidden"><div class="h" style="left:0px;top:0px;width:22px;height:20px;line-height:20px;text-align:center;">83</div></div>
<div style="left:0px;top:286px;width:27px;height:19px;overflow:hidden"><div class="h" style="left:0px;top:0px;width:22px;height:20px;line-height:20px;text-align:center;">84</div></div>
<div style="left:0px;top:306px;width:27px;height:19px;overflow:hidden"><div class="h" style="left:0px;top:0px;width:22px;height:20px;line-height:20px;text-align:center;">85</div></div>
<div style="left:0px;top:326px;width:27px;height:19px;overflow:hidden"><div class="h" style="left:0px;top:0px;width:22px;height:20px;line-height:20px;text-align:center;">86</div></div>
<div style="left:0px;top:346px;width:27px;height:19px;overflow:hidden"><div class="h" style="left:0px;top:0px;width:22px;height:20px;line-height:20px;text-align:center;">87</div></div>
<div style="left:0px;top:366px;width:27px;height:19px;overflow:hidden"><div class="h" style="left:0px;top:0px;width:22px;height:20px;line-height:20px;text-align:center;">88</div></div>
<div style="left:0px;top:386px;width:27px;height:19px;overflow:hidden"><div class="h" style="left:0px;top:0px;width:22px;height:20px;line-height:20px;text-align:center;">89</div></div>
<div style="left:0px;top:406px;width:27px;height:58px;overflow:hidden"><div class="h" style="left:0px;top:39px;width:22px;height:20px;line-height:20px;text-align:center;">90</div></div>
<div style="left:0px;top:465px;width:27px;height:19px;overflow:hidden"><div class="h" style="left:0px;top:0px;width:22px;height:20px;line-height:20px;text-align:center;">91</div></div>
<div style="left:0px;top:484px;width:28px;height:21px;background:#E1E1E1"></div>
<div style="left:0px;top:484px;width:27px;height:1px;background:#BDBDBD"></div>
<div style="left:0px;top:504px;width:27px;height:1px;background:#BDBDBD"></div>
<div style="left:27px;top:484px;width:2px;height:21px;background:#217346"></div>
<div style="left:0px;top:485px;width:27px;height:19px;overflow:hidden"><div class="h" style="left:0px;top:0px;width:22px;height:20px;line-height:20px;text-align:center;color:#217346;font-weight:bold;">92</div></div>
<div style="left:0px;top:505px;width:27px;height:19px;overflow:hidden"><div class="h" style="left:0px;top:0px;width:22px;height:20px;line-height:20px;text-align:center;">93</div></div>
<div style="left:0px;top:525px;width:27px;height:19px;overflow:hidden"><div class="h" style="left:0px;top:0px;width:22px;height:20px;line-height:20px;text-align:center;">94</div></div>
<div style="left:0px;top:545px;width:27px;height:19px;overflow:hidden"><div class="h" style="left:0px;top:0px;width:22px;height:20px;line-height:20px;text-align:center;">95</div></div>
<div style="left:0px;top:565px;width:27px;height:19px;overflow:hidden"><div class="h" style="left:0px;top:0px;width:22px;height:20px;line-height:20px;text-align:center;">96</div></div>
<div style="left:0px;top:585px;width:27px;height:19px;overflow:hidden"><div class="h" style="left:0px;top:0px;width:22px;height:20px;line-height:20px;text-align:center;">97</div></div>
<div style="left:0px;top:605px;width:27px;height:19px;overflow:hidden"><div class="h" style="left:0px;top:0px;width:22px;height:20px;line-height:20px;text-align:center;">98</div></div>
<div style="left:0px;top:625px;width:27px;height:19px;overflow:hidden"><div class="h" style="left:0px;top:0px;width:22px;height:20px;line-height:20px;text-align:center;">99</div></div>
<div style="left:0px;top:645px;width:27px;height:19px;overflow:hidden"><div class="h" style="left:0px;top:0px;width:22px;height:20px;line-height:20px;text-align:center;">100</div></div>
<div style="left:0px;top:665px;width:27px;height:19px;overflow:hidden"><div class="h" style="left:0px;top:0px;width:22px;height:20px;line-height:20px;text-align:center;">101</div></div>
<div style="left:0px;top:685px;width:27px;height:19px;overflow:hidden"><div class="h" style="left:0px;top:0px;width:22px;height:20px;line-height:20px;text-align:center;">102</div></div>
<div style="left:0px;top:705px;width:27px;height:19px;overflow:hidden"><div class="h" style="left:0px;top:0px;width:22px;height:20px;line-height:20px;text-align:center;">103</div></div>
<div style="left:0px;top:725px;width:27px;height:19px;overflow:hidden"><div class="h" style="left:0px;top:0px;width:22px;height:20px;line-height:20px;text-align:center;">104</div></div>
<div style="left:0px;top:745px;width:27px;height:19px;overflow:hidden"><div class="h" style="left:0px;top:0px;width:22px;height:20px;line-height:20px;text-align:center;">105</div></div>
<div style="left:0px;top:765px;width:27px;height:19px;overflow:hidden"><div class="h" style="left:0px;top:0px;width:22px;height:20px;line-height:20px;text-align:center;">106</div></div>
<div style="left:0px;top:785px;width:27px;height:19px;overflow:hidden"><div class="h" style="left:0px;top:0px;width:22px;height:20px;line-height:20px;text-align:center;">107</div></div>
<div style="left:0px;top:805px;width:27px;height:19px;overflow:hidden"><div class="h" style="left:0px;top:0px;width:22px;height:20px;line-height:20px;text-align:center;">108</div></div>
<div style="left:0px;top:825px;width:27px;height:19px;overflow:hidden"><div class="h" style="left:0px;top:0px;width:22px;height:20px;line-height:20px;text-align:center;">109</div></div>
<div style="left:0px;top:845px;width:27px;height:19px;overflow:hidden"><div class="h" style="left:0px;top:0px;width:22px;height:20px;line-height:20px;text-align:center;">110</div></div>
<div style="left:0px;top:61px;width:1493px;height:1px;background:#9B9B9B"></div>
<div style="left:0px;top:853px;width:1493px;height:25px;background:#F3F3F3"></div>
<div style="left:0px;top:853px;width:1493px;height:1px;background:#C6C6C6"></div>
<div style="left:98px;top:854px;width:1198px;height:2px;background:#FBFBFB"></div>
<div style="left:538px;top:854px;width:5px;height:24px;background:#FFFFFF"></div>
<div style="left:799px;top:854px;width:5px;height:24px;background:#FFFFFF"></div>
<div style="left:909px;top:854px;width:5px;height:24px;background:#FFFFFF"></div>
<div style="left:1098px;top:854px;width:5px;height:24px;background:#FFFFFF"></div>
<div style="left:1274px;top:854px;width:5px;height:24px;background:#FFFFFF"></div>
<div style="left:166px;top:856px;width:4px;height:22px;background:#FFFFFF"></div>
<div style="left:228px;top:856px;width:2px;height:22px;background:#FFFFFF"></div>
<div style="left:360px;top:856px;width:2px;height:22px;background:#FFFFFF"></div>
<svg style="position:absolute;left:0px;top:860px" width="60" height="16"><polygon points="27,3 27,12 22.5,7.5" fill="#C8C8C8"/><polygon points="51,3 51,12 55.5,7.5" fill="#217346"/></svg>
<div style="left:97px;top:857px;width:1px;height:21px;background:#ABABAB"></div>
<div class="tab" style="left:98px;top:855px;width:69px;height:22px;line-height:19px;text-align:center;color:#333;font-weight:normal;font-size:17px;letter-spacing:0.15px">Cover</div>
<div style="left:167px;top:857px;width:1px;height:21px;background:#ABABAB"></div>
<div style="left:166px;top:856px;width:1px;height:22px;background:#F3F3F3"></div>
<div style="left:170px;top:856px;width:58px;height:22px;background:#A9D08E"></div>
<div class="tab" style="left:170px;top:855px;width:58px;height:22px;line-height:19px;text-align:center;color:#222;font-weight:normal;font-size:17px;letter-spacing:0.15px">Intro</div>
<div style="left:230px;top:853px;width:130px;height:25px;background:#FFFFFF"></div>
<div style="left:233px;top:857px;width:124px;height:19px;background:#FFFAF0"></div>
<div style="left:230px;top:853px;width:1px;height:25px;background:#ABABAB"></div>
<div style="left:359px;top:853px;width:1px;height:25px;background:#ABABAB"></div>
<div style="left:231px;top:877px;width:128px;height:1px;background:#217346"></div>
<div class="tab" style="left:231px;top:855px;width:128px;height:22px;line-height:19px;text-align:center;color:#217346;font-weight:bold;font-size:17px;letter-spacing:0.15px">Input Drivers</div>
<div style="left:362px;top:856px;width:176px;height:22px;background:#2E75B6"></div>
<div class="tab" style="left:362px;top:855px;width:176px;height:22px;line-height:19px;text-align:center;color:#fff;font-weight:normal;font-size:17px;letter-spacing:0.15px">Company Valuation</div>
<div style="left:540px;top:857px;width:1px;height:21px;background:#ABABAB"></div>
<div style="left:543px;top:856px;width:256px;height:22px;background:#2E75B6"></div>
<div class="tab" style="left:543px;top:855px;width:256px;height:22px;line-height:19px;text-align:center;color:#fff;font-weight:normal;font-size:17px;letter-spacing:0.15px">Startup Investment Summary</div>
<div style="left:801px;top:857px;width:1px;height:21px;background:#ABABAB"></div>
<div style="left:804px;top:856px;width:106px;height:22px;background:#2E75B6"></div>
<div class="tab" style="left:804px;top:855px;width:106px;height:22px;line-height:19px;text-align:center;color:#fff;font-weight:normal;font-size:17px;letter-spacing:0.15px">Dashboard</div>
<div style="left:911px;top:857px;width:1px;height:21px;background:#ABABAB"></div>
<div style="left:914px;top:856px;width:184px;height:22px;background:#2E75B6"></div>
<div class="tab" style="left:914px;top:855px;width:184px;height:22px;line-height:19px;text-align:center;color:#fff;font-weight:normal;font-size:17px;letter-spacing:0.15px">Revenue Forecasting</div>
<div style="left:1100px;top:857px;width:1px;height:21px;background:#ABABAB"></div>
<div style="left:1103px;top:856px;width:171px;height:22px;background:#FFC000"></div>
<div class="tab" style="left:1103px;top:855px;width:171px;height:22px;line-height:19px;text-align:center;color:#111;font-weight:normal;font-size:17px;letter-spacing:0.15px">Income Statement</div>
<div style="left:1276px;top:857px;width:1px;height:21px;background:#ABABAB"></div>
<div style="left:1279px;top:856px;width:15px;height:22px;background:#FFC000"></div>
<div style="left:1292px;top:862px;width:2px;height:11px;background:#6b3a10;border-radius:2px 0 0 2px;opacity:0.8"></div>
<svg style="position:absolute;left:1296px;top:856px" width="196" height="22"><circle cx="6" cy="12.5" r="1.3" fill="#217346"/><circle cx="11" cy="12.5" r="1.3" fill="#217346"/><circle cx="16" cy="12.5" r="1.3" fill="#217346"/><circle cx="41" cy="11.5" r="9" fill="none" stroke="#777" stroke-width="1.3"/><line x1="36" y1="11.5" x2="46" y2="11.5" stroke="#666" stroke-width="1.6"/><line x1="41" y1="6.5" x2="41" y2="16.5" stroke="#666" stroke-width="1.6"/><circle cx="70" cy="8" r="1" fill="#aaa"/><circle cx="70" cy="12" r="1" fill="#aaa"/><circle cx="70" cy="16" r="1" fill="#aaa"/></svg>
<div style="left:1383px;top:858px;width:120px;height:18px;background:#fff;border:1px solid #C6C6C6;box-sizing:border-box"></div>
<div style="left:1402px;top:858px;width:1px;height:18px;background:#C6C6C6"></div>
<svg style="position:absolute;left:1383px;top:858px" width="20" height="18"><polygon points="12,4.5 12,13.5 7,9" fill="#777"/></svg>
</body></html>
